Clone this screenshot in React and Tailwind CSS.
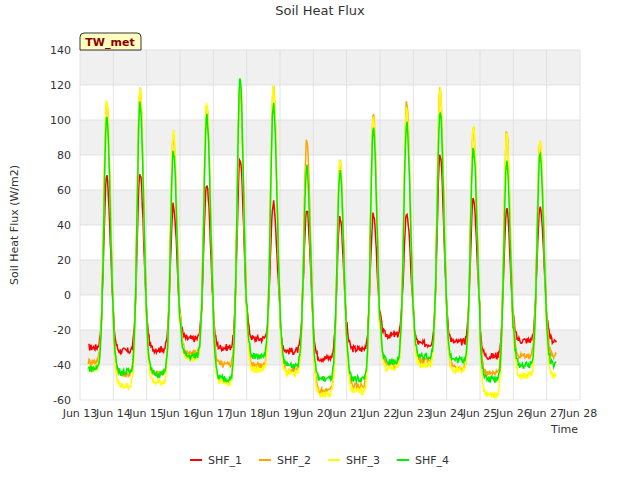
import React from 'react';

const X0 = 80, X1 = 580, Y0 = 50, Y1 = 400;
const xs = (d) => X0 + ((d - 13) / 15) * (X1 - X0);
const ys = (v) => Y0 + ((140 - v) / 200) * (Y1 - Y0);
const g = (x, w) => Math.exp(-((x / w) * (x / w)));

const peaks = {
  SHF_1: [68, 70, 52, 64, 78, 53, 49, 45, 46, 47, 81, 55, 49, 51],
  SHF_2: [110, 118, 92, 108, 118, 120, 88, 77, 104, 110, 118, 97, 92, 88],
  SHF_3: [112, 119, 94, 109, 123, 120, 74, 77, 101, 108, 118, 97, 92, 88],
  SHF_4: [101, 110, 82, 103, 124, 109, 73, 70, 95, 98, 105, 84, 76, 80],
};
const troughs = {
  SHF_1: [-30, -32, -31, -25, -30, -25, -32, -36, -31, -23, -28, -27, -35, -26],
  SHF_2: [-38, -45, -45, -33, -40, -40, -43, -55, -52, -40, -38, -42, -45, -35],
  SHF_3: [-42, -52, -50, -36, -50, -43, -45, -57, -55, -42, -40, -43, -57, -46],
  SHF_4: [-42, -44, -45, -35, -48, -35, -40, -48, -48, -38, -35, -37, -48, -40],
};
const colors = { SHF_1: '#ff0000', SHF_2: '#ffa500', SHF_3: '#ffff00', SHF_4: '#00ee00' };

function series(name, seed) {
  const pts = [];
  let r = seed;
  const rnd = () => { r = (r * 9301 + 49297) % 233280; return r / 233280 - 0.5; };
  for (let d = 13.25; d <= 27.3; d += 0.02) {
    const k = Math.floor(d - 13);
    const ph = d - 13 - k;
    const idx = Math.min(13, k);
    const tr = troughs[name][idx];
    const pk = peaks[name][idx];
    const dt = ph - 0.8;
    let s = dt < 0 ? g(dt, 0.12) : g(dt, 0.16);
    if (ph < 0.3) {
      s = g(ph + 0.2, 0.16) * (peaks[name][Math.max(0, idx - 1)] - tr) / (pk - tr || 1);
    }
    const v = tr + (pk - tr) * s + rnd() * 4;
    pts.push(`${xs(d).toFixed(1)},${ys(v).toFixed(1)}`);
  }
  return pts.join(' ');
}

export default function App() {
  const bands = [120, 80, 40, 0, -40];
  const ticks = [-60, -40, -20, 0, 20, 40, 60, 80, 100, 120, 140];
  const days = Array.from({ length: 16 }, (_, i) => 13 + i);
  const names = ['SHF_1', 'SHF_2', 'SHF_3', 'SHF_4'];
  return (
    <div className="w-[640px] h-[480px] bg-white" style={{ fontFamily: '"DejaVu Sans", sans-serif' }}>
      <svg width="640" height="480" className="block">
        <text x="320" y="15" textAnchor="middle" fontSize="13" fill="#333">Soil Heat Flux</text>
        {bands.map((b) => (
          <rect key={b} x={X0} y={ys(b + 20)} width={X1 - X0} height={ys(b) - ys(b + 20)} fill="#f0f0f0" />
        ))}
        {ticks.map((t) => (
          <g key={t}>
            <line x1={X0} x2={X1} y1={ys(t)} y2={ys(t)} stroke="#dcdcdc" strokeWidth="0.8" />
            <text x={X0 - 9} y={ys(t) + 4} textAnchor="end" fontSize="11" fill="#333">{t}</text>
          </g>
        ))}
        {days.map((d) => (
          <g key={d}>
            <line x1={xs(d)} x2={xs(d)} y1={Y0} y2={Y1} stroke="#dcdcdc" strokeWidth="0.8" />
            <text x={xs(d)} y={Y1 + 17} textAnchor="middle" fontSize="11" fill="#333">Jun {d}</text>
          </g>
        ))}
        {names.map((n, i) => (
          <polyline key={n} points={series(n, 17 + i * 31)} fill="none" stroke={colors[n]} strokeWidth="1.5" />
        ))}
        <text x="578" y="433" textAnchor="end" fontSize="11" fill="#333">Time</text>
        <text x="18" y="225" textAnchor="middle" fontSize="11" fill="#333" transform="rotate(-90 18 225)">Soil Heat Flux (W/m2)</text>
        <path d="M80 50 V37 Q80 33 84 33 H137 Q141 33 141 37 V50 Z" fill="#ffffc0" stroke="#000" strokeWidth="0.8" />
        <text x="110" y="46" textAnchor="middle" fontSize="11" fontWeight="bold" fill="#8b0000">TW_met</text>
        {names.map((n, i) => {
          const x = 190 + i * 69;
          return (
            <g key={n}>
              <line x1={x} x2={x + 12} y1={460} y2={460} stroke={colors[n]} strokeWidth="2" />
              <text x={x + 18} y={464} fontSize="11" fill="#333">{n}</text>
            </g>
          );
        })}
      </svg>
    </div>
  );
}
